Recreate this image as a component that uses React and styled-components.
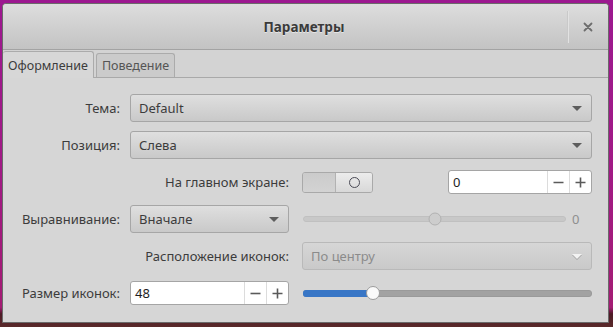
import React from 'react'
import styled, { createGlobalStyle } from 'styled-components'

const GlobalStyle = createGlobalStyle`
  html, body {
    margin: 0;
    padding: 0;
    width: 613px;
    height: 327px;
    overflow: hidden;
    background: linear-gradient(180deg, #9c1890 0%, #a11a86 50%, #a41c74 94%, #4e1a26 96%, #5a2a2a 100%);
    font-family: "Noto Sans", "Open Sans", sans-serif;
    font-size: 13px;
    color: #3c3c3c;
  }
`

const Desktop = styled.div`
  width: 613px;
  height: 327px;
  padding: 3px 4px 0 2px;
  box-sizing: border-box;
`

const Window = styled.div`
  width: 607px;
  height: 320px;
  border: 1px solid #6a6a6a;
  border-radius: 4px 4px 0 0;
  background: #d6d6d6;
  box-sizing: border-box;
  display: flex;
  flex-direction: column;
  overflow: hidden;
`

const TitleBar = styled.div`
  height: 46px;
  flex: none;
  display: flex;
  align-items: center;
  background: linear-gradient(180deg, #dddddd 0%, #c3c3c3 100%);
  border-bottom: 1px solid #a3a3a3;
  box-sizing: border-box;
`

const Title = styled.div`
  flex: 1;
  text-align: center;
  font-weight: bold;
  font-size: 13.5px;
  color: #3a3a3a;
  padding-left: 38px;
  text-shadow: 0 1px 0 rgba(255, 255, 255, 0.5);
`

const CloseBox = styled.div`
  width: 40px;
  height: 32px;
  border-left: 1px solid #c9c9c9;
  box-shadow: inset 1px 0 0 #e2e2e2;
  display: flex;
  align-items: center;
  justify-content: center;
`

const TabBar = styled.div`
  flex: none;
  display: flex;
  align-items: flex-end;
  gap: 2px;
  height: 28px;
  background: #d3d3d3;
  border-bottom: 1px solid #a9a9a9;
  box-sizing: border-box;
`

const Tab = styled.div`
  height: ${p => (p.$active ? '27px' : '24px')};
  padding: 0 5px;
  display: flex;
  align-items: center;
  box-sizing: border-box;
  font-size: 12.5px;
  border: 1px solid #ababab;
  border-left: ${p => (p.$active ? 'none' : '1px solid #ababab')};
  border-bottom: none;
  border-radius: 3px 3px 0 0;
  margin-bottom: ${p => (p.$active ? '-1px' : '0')};
  background: ${p => (p.$active ? '#d7d7d7' : '#cbcbcb')};
  color: ${p => (p.$active ? '#3c3c3c' : '#555')};
`

const Panel = styled.div`
  flex: 1;
  display: grid;
  grid-template-columns: 112px 172px 290px;
  grid-auto-rows: 28px;
  row-gap: 9px;
  padding: 16px 0 0 15px;
  align-items: center;
`

const Label = styled.div`
  grid-column: ${p => p.$span || 'auto'};
  text-align: right;
  padding-right: ${p => (p.$span ? '13px' : '10px')};
  white-space: nowrap;
`

const Cell = styled.div`
  grid-column: ${p => p.$span || 'auto'};
  padding-right: ${p => (p.$mid ? '13px' : '0')};
  display: flex;
  align-items: center;
  justify-content: space-between;
  min-width: 0;
`

const Combo = styled.div`
  width: 100%;
  height: 28px;
  box-sizing: border-box;
  border: 1px solid ${p => (p.$disabled ? '#b9b9b9' : '#a6a6a6')};
  border-radius: 3px;
  background: ${p =>
    p.$disabled
      ? 'linear-gradient(180deg, #d6d6d6 0%, #c9c9c9 100%)'
      : 'linear-gradient(180deg, #dfdfdf 0%, #c9c9c9 100%)'};
  display: flex;
  align-items: center;
  justify-content: space-between;
  padding: 0 9px 0 8px;
  color: ${p => (p.$disabled ? '#8b8b8b' : '#3c3c3c')};
`

const Arrow = styled.span`
  width: 0;
  height: 0;
  border-left: 5px solid transparent;
  border-right: 5px solid transparent;
  border-top: 5px solid ${p => (p.$disabled ? '#f2f2f2' : '#5d5d5d')};
  filter: ${p => (p.$disabled ? 'drop-shadow(0 1px 0 #a0a0a0)' : 'none')};
`

const Switch = styled.div`
  width: 71px;
  height: 21px;
  box-sizing: border-box;
  border: 1px solid #a9a9a9;
  border-radius: 3px;
  display: flex;
  overflow: hidden;
`

const SwitchTrack = styled.div`
  flex: 1;
  background: linear-gradient(180deg, #cbcbcb 0%, #d3d3d3 100%);
  border-right: 1px solid #b2b2b2;
`

const SwitchKnob = styled.div`
  width: 36px;
  background: linear-gradient(180deg, #ececec 0%, #d8d8d8 100%);
  display: flex;
  align-items: center;
  justify-content: center;
`

const Ring = styled.span`
  width: 9px;
  height: 9px;
  border: 1px solid #4a4a55;
  border-radius: 50%;
`

const Spin = styled.div`
  width: ${p => p.$width}px;
  height: 24px;
  box-sizing: border-box;
  border: 1px solid #a5a5a5;
  border-radius: 3px;
  background: #fff;
  display: flex;
  align-items: stretch;
`

const SpinValue = styled.div`
  flex: 1;
  display: flex;
  align-items: center;
  padding-left: 4px;
  color: #1e1e1e;
`

const SpinButton = styled.div`
  width: 21px;
  border-left: 1px solid #dcdcdc;
  display: flex;
  align-items: center;
  justify-content: center;
`

const SliderRow = styled.div`
  flex: 1;
  display: flex;
  align-items: center;
  gap: 6px;
`

const Track = styled.div`
  position: relative;
  flex: 1;
  height: ${p => (p.$disabled ? 4 : 5)}px;
  border-radius: 3px;
  background: ${p => (p.$disabled ? '#c8c8c8' : '#a2a2a2')};
  border: 1px solid ${p => (p.$disabled ? '#c0c0c0' : '#9a9a9a')};
  margin-left: 1px;
`

const Fill = styled.div`
  position: absolute;
  left: -1px;
  top: -1px;
  bottom: -1px;
  border-radius: 3px;
  background: #3876c6;
`

const Knob = styled.div`
  position: absolute;
  top: 50%;
  width: ${p => (p.$disabled ? 13 : 14)}px;
  height: ${p => (p.$disabled ? 13 : 14)}px;
  transform: translate(-50%, -50%);
  border-radius: 50%;
  box-sizing: border-box;
  border: 1px solid ${p => (p.$disabled ? '#b1b1b1' : '#9c9c9c')};
  background: ${p => (p.$disabled ? '#cdcdcd' : '#fafafa')};
`

const SliderValue = styled.span`
  color: #8f8f8f;
  width: 20px;
`

const CloseIcon = () => (
  <svg width="10" height="10" viewBox="0 0 10 10">
    <path d="M1.5 1.5 L8.5 8.5 M8.5 1.5 L1.5 8.5" stroke="#6d6d6d" strokeWidth="1.8" strokeLinecap="round" />
  </svg>
)

const MinusIcon = () => (
  <svg width="11" height="11" viewBox="0 0 11 11">
    <path d="M0.5 5.5 H10.5" stroke="#5a5a5a" strokeWidth="1.6" />
  </svg>
)

const PlusIcon = () => (
  <svg width="11" height="11" viewBox="0 0 11 11">
    <path d="M0.5 5.5 H10.5 M5.5 0.5 V10.5" stroke="#5a5a5a" strokeWidth="1.6" />
  </svg>
)

function SpinBox({ value, width }) {
  return (
    <Spin $width={width}>
      <SpinValue>{value}</SpinValue>
      <SpinButton><MinusIcon /></SpinButton>
      <SpinButton><PlusIcon /></SpinButton>
    </Spin>
  )
}

function Slider({ value, disabled }) {
  return (
    <Track $disabled={disabled}>
      {!disabled && <Fill style={{ width: `${value}%` }} />}
      <Knob $disabled={disabled} style={{ left: `${value}%` }} />
    </Track>
  )
}

export default function App() {
  return (
    <Desktop>
      <GlobalStyle />
      <Window>
        <TitleBar>
          <Title>Параметры</Title>
          <CloseBox>
            <CloseIcon />
          </CloseBox>
        </TitleBar>
        <TabBar>
          <Tab $active>Оформление</Tab>
          <Tab>Поведение</Tab>
        </TabBar>
        <Panel>
          <Label>Тема:</Label>
          <Cell $span="2 / 4">
            <Combo>Default<Arrow /></Combo>
          </Cell>

          <Label>Позиция:</Label>
          <Cell $span="2 / 4">
            <Combo>Слева<Arrow /></Combo>
          </Cell>

          <Label $span="1 / 3">На главном экране:</Label>
          <Cell>
            <Switch>
              <SwitchTrack />
              <SwitchKnob><Ring /></SwitchKnob>
            </Switch>
            <SpinBox value="0" width={144} />
          </Cell>

          <Label>Выравнивание:</Label>
          <Cell $mid>
            <Combo>Вначале<Arrow /></Combo>
          </Cell>
          <Cell>
            <SliderRow>
              <Slider value={50} disabled />
              <SliderValue>0</SliderValue>
            </SliderRow>
          </Cell>

          <Label $span="1 / 3">Расположение иконок:</Label>
          <Cell>
            <Combo $disabled>По центру<Arrow $disabled /></Combo>
          </Cell>

          <Label>Размер иконок:</Label>
          <Cell $mid>
            <SpinBox value="48" width={159} />
          </Cell>
          <Cell>
            <SliderRow>
              <Slider value={24} />
            </SliderRow>
          </Cell>
        </Panel>
      </Window>
    </Desktop>
  )
}
